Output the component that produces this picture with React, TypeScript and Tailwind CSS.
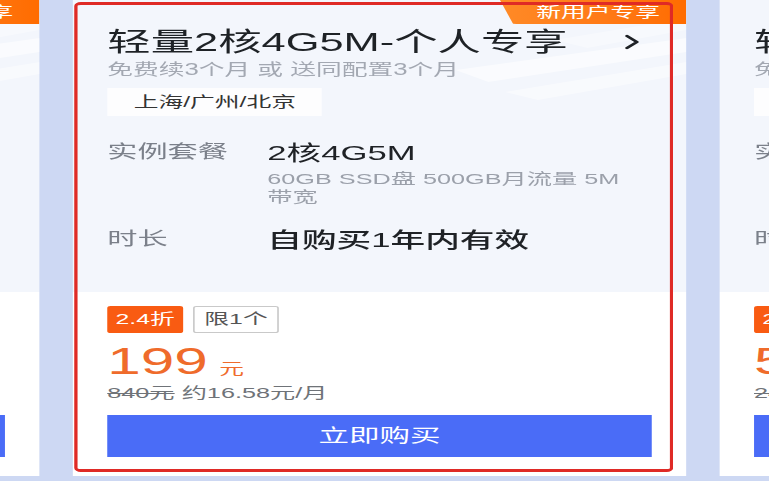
import React from "react";

type Product = {
  title: string;
  sub: string;
  region: string;
  spec: string;
  detail: string;
  duration: string;
  discount: string;
  limit: string;
  price: string;
  orig: string;
  monthly: string;
};

const products: Product[] = [
  {
    title: "轻量2核2G4M-个人专享",
    sub: "免费续3个月 或 送同配置3个月",
    region: "上海/广州/北京",
    spec: "2核2G4M",
    detail: "50GB SSD盘 300GB月流量 4M 带宽",
    duration: "自购买1年内有效",
    discount: "2.2折",
    limit: "限1个",
    price: "99",
    orig: "540元",
    monthly: "约8.25元/月",
  },
  {
    title: "轻量2核4G5M-个人专享",
    sub: "免费续3个月 或 送同配置3个月",
    region: "上海/广州/北京",
    spec: "2核4G5M",
    detail: "60GB SSD盘 500GB月流量 5M 带宽",
    duration: "自购买1年内有效",
    discount: "2.4折",
    limit: "限1个",
    price: "199",
    orig: "840元",
    monthly: "约16.58元/月",
  },
  {
    title: "轻量4核8G12M-个人专享",
    sub: "免费续3个月 或 送同配置3个月",
    region: "上海/广州/北京",
    spec: "4核8G12M",
    detail: "180GB SSD盘 2000GB月流量 12M 带宽",
    duration: "自购买1年内有效",
    discount: "2.2折",
    limit: "限1个",
    price: "528",
    orig: "2400元",
    monthly: "约44元/月",
  },
];

function Chevron() {
  return (
    <svg width="10" height="16" viewBox="0 0 10 16" className="mr-[7px] shrink-0">
      <polyline points="2,2 8,8 2,14" fill="none" stroke="#1e2226" strokeWidth="2.3" strokeLinecap="round" strokeLinejoin="round" />
    </svg>
  );
}

function Deco() {
  return (
    <svg
      className="pointer-events-none absolute right-0 top-0"
      width="200"
      height="130"
      viewBox="0 0 200 130"
    >
      <polygon points="60,70 200,38 200,52 80,82" fill="#ffffff" opacity="0.55" />
      <polygon points="90,92 200,62 200,74 110,100" fill="#ffffff" opacity="0.45" />
      <polygon points="120,40 200,18 200,30 140,48" fill="#ffffff" opacity="0.35" />
    </svg>
  );
}

function Card({ d, highlight }: { d: Product; highlight?: boolean }) {
  return (
    <div className="relative flex h-[476px] w-[372px] shrink-0 flex-col overflow-hidden">
      <div className="relative flex h-[292px] flex-col bg-[#f3f6fc] px-[21px] pt-[26px]">
        <Deco />
        <div className="relative flex items-center justify-between">
          <span className="whitespace-nowrap text-[26.3px] leading-[32px] text-[#1e2226]">{d.title}</span>
          <Chevron />
        </div>
        <div className="relative mt-[2px] whitespace-nowrap text-[15.6px] leading-[20px] text-[#a3a8b2]">{d.sub}</div>
        <div className="relative mt-[8px] flex h-[28px] w-fit items-center bg-[#fdfdfe] px-[16px] text-[15px] text-[#333333]">
          {d.region}
        </div>
        <div className="relative mt-[24px] flex">
          <div className="w-[97px] shrink-0 text-[18.3px] leading-[24px] text-[#7b808a]">实例套餐</div>
          <div className="min-w-0 flex-1 pr-[6px]">
            <div className="text-[21px] leading-[26px] text-[#1f2226]">{d.spec}</div>
            <div className="mt-[4px] text-[15.3px] leading-[18px] text-[#9ba0aa]">{d.detail}</div>
          </div>
        </div>
        <div className="relative mt-[21px] flex">
          <div className="w-[97px] shrink-0 text-[18.3px] leading-[24px] text-[#7b808a]">时长</div>
          <div className="text-[21px] font-medium leading-[26px] text-[#1f2226]">{d.duration}</div>
        </div>
      </div>
      <div className="flex flex-1 flex-col bg-white px-[21px] pt-[14px]">
        <div className="flex gap-[6px]">
          <span className="flex h-[27px] items-center rounded-[2px] bg-[#f95b12] px-[5px] text-[15px] text-white">
            {d.discount}
          </span>
          <span className="flex h-[27px] items-center rounded-[2px] border border-[#c9c9c9] bg-white px-[6px] text-[15px] text-[#555555]">
            {d.limit}
          </span>
        </div>
        <div className="mt-[9px] flex items-baseline">
          <span className="text-[36.5px] leading-[40px] text-[#ef6b2b]">{d.price}</span>
          <span className="ml-[7px] text-[15px] text-[#ef6b2b]">元</span>
        </div>
        <div className="mt-[1px] whitespace-nowrap text-[15.3px] leading-[20px] text-[#6f7378]">
          <span className="line-through">{d.orig}</span> {d.monthly}
        </div>
        <button className="mt-[12px] flex h-[42px] w-full items-center justify-center bg-[#4a6cf7] text-[18.5px] text-white">
          立即购买
        </button>
      </div>
      <div className="absolute right-0 top-0 flex h-[24px] w-[113px] items-center justify-center rounded-bl-[10px] bg-gradient-to-r from-[#ff8a26] to-[#ff6c00] pl-[6px] text-[15px] text-white [clip-path:polygon(0_0,100%_0,100%_100%,8px_100%)]">
        新用户专享
      </div>
      {highlight && (
        <div className="pointer-events-none absolute left-[1px] top-[2px] h-[470px] w-[363px] rounded-[4px] border-x-[2px] border-y-[3px] border-[#df2a26]" />
      )}
    </div>
  );
}

export default function App() {
  return (
    <div className="h-[481px] w-[769px] overflow-hidden bg-[#cdd8f3] font-['Liberation_Sans','Noto_Sans_CJK_SC',sans-serif]">
      <div className="h-[481px] w-[466px] origin-top-left scale-x-[1.65]">
        <div className="ml-[-348px] flex items-start gap-[20px]">
          <Card d={products[0]} />
          <Card d={products[1]} highlight />
          <Card d={products[2]} />
        </div>
      </div>
    </div>
  );
}
